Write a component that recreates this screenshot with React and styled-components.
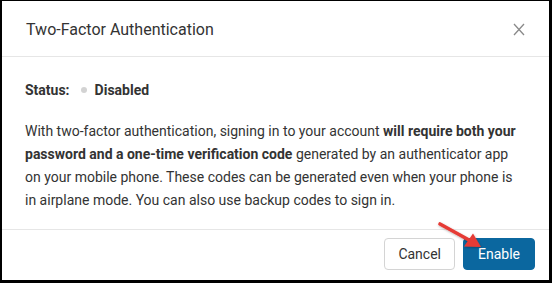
import React from 'react';
import styled, { createGlobalStyle } from 'styled-components';

const GlobalStyle = createGlobalStyle`
  html, body {
    margin: 0;
    padding: 0;
    background: #000;
  }
  * {
    box-sizing: border-box;
  }
`;

const Frame = styled.div`
  width: 552px;
  height: 283px;
  border-style: solid;
  border-color: #000;
  border-width: 1px 3px 3px 2px;
  background: #fff;
  display: flex;
  flex-direction: column;
  position: relative;
  font-family: Roboto, "Liberation Sans", Arial, sans-serif;
  color: #333;
`;

const Header = styled.div`
  height: 56px;
  display: flex;
  align-items: center;
  justify-content: space-between;
  padding: 2px 23px 0 24px;
  border-bottom: 1px solid #e6e6e6;
`;

const Title = styled.h2`
  margin: 0;
  font-size: 16px;
  font-weight: 400;
  color: #333;
`;

const CloseButton = styled.button`
  border: 0;
  background: none;
  padding: 0;
  width: 14px;
  height: 14px;
  display: flex;
  align-items: center;
  justify-content: center;
  cursor: pointer;
`;

const Body = styled.div`
  flex: 1;
  padding: 23px 24px 0 23px;
`;

const StatusRow = styled.div`
  display: flex;
  align-items: center;
  font-size: 14px;
  font-weight: 700;
  height: 20px;
  margin-bottom: 20px;
`;

const StatusLabel = styled.span`
  margin-right: 11px;
`;

const Dot = styled.span`
  width: 6px;
  height: 6px;
  border-radius: 50%;
  background: ${(p) => (p.$on ? '#3c9d4e' : '#d3d3d3')};
  margin-right: 8px;
`;

const Text = styled.p`
  margin: 0;
  font-size: 14px;
  line-height: 23px;
  color: #333;

  strong {
    font-weight: 700;
  }
`;

const Footer = styled.div`
  height: 51px;
  border-top: 1px solid #e6e6e6;
  display: flex;
  align-items: center;
  justify-content: flex-end;
  gap: 8px;
  padding: 0 14px 3px 0;
`;

const Button = styled.button`
  height: 32px;
  padding: 0 ${(p) => (p.$primary ? 14 : 13)}px;
  border-radius: 4px;
  font-family: inherit;
  font-size: 14px;
  cursor: pointer;
  border: 1px solid ${(p) => (p.$primary ? '#0b679f' : '#d4d4d4')};
  background: ${(p) => (p.$primary ? '#0b679f' : '#fff')};
  color: ${(p) => (p.$primary ? '#fff' : '#333')};
`;

const Arrow = styled.svg`
  position: absolute;
  left: 431px;
  top: 217px;
  width: 54px;
  height: 36px;
  pointer-events: none;
`;

export default function App() {
  return (
    <>
      <GlobalStyle />
      <Frame>
        <Header>
          <Title>Two-Factor Authentication</Title>
          <CloseButton aria-label="Close">
            <svg width="12" height="13" viewBox="0 0 12 13">
              <path d="M1 1 L11 12 M11 1 L1 12" stroke="#8a8a8a" strokeWidth="1.3" fill="none" />
            </svg>
          </CloseButton>
        </Header>
        <Body>
          <StatusRow>
            <StatusLabel>Status:</StatusLabel>
            <Dot />
            <span>Disabled</span>
          </StatusRow>
          <Text>
            With two-factor authentication, signing in to your account{' '}
            <strong>will require both your password and a one-time verification code</strong>{' '}
            generated by an authenticator app on your mobile phone. These codes can be generated even
            when your phone is in airplane mode. You can also use backup codes to sign in.
          </Text>
        </Body>
        <Footer>
          <Button>Cancel</Button>
          <Button $primary>Enable</Button>
        </Footer>
        <Arrow viewBox="0 0 54 36">
          <defs>
            <filter id="sh" x="-20%" y="-20%" width="140%" height="140%">
              <feDropShadow dx="0.5" dy="1" stdDeviation="0.8" floodColor="#000" floodOpacity="0.3" />
            </filter>
          </defs>
          <g filter="url(#sh)">
            <path d="M7 6 L36 22" stroke="#e63b35" strokeWidth="3.6" strokeLinecap="round" fill="none" />
            <path d="M48 29 L31 28.5 L40 15.5 Z" fill="#e63b35" />
          </g>
        </Arrow>
      </Frame>
    </>
  );
}
